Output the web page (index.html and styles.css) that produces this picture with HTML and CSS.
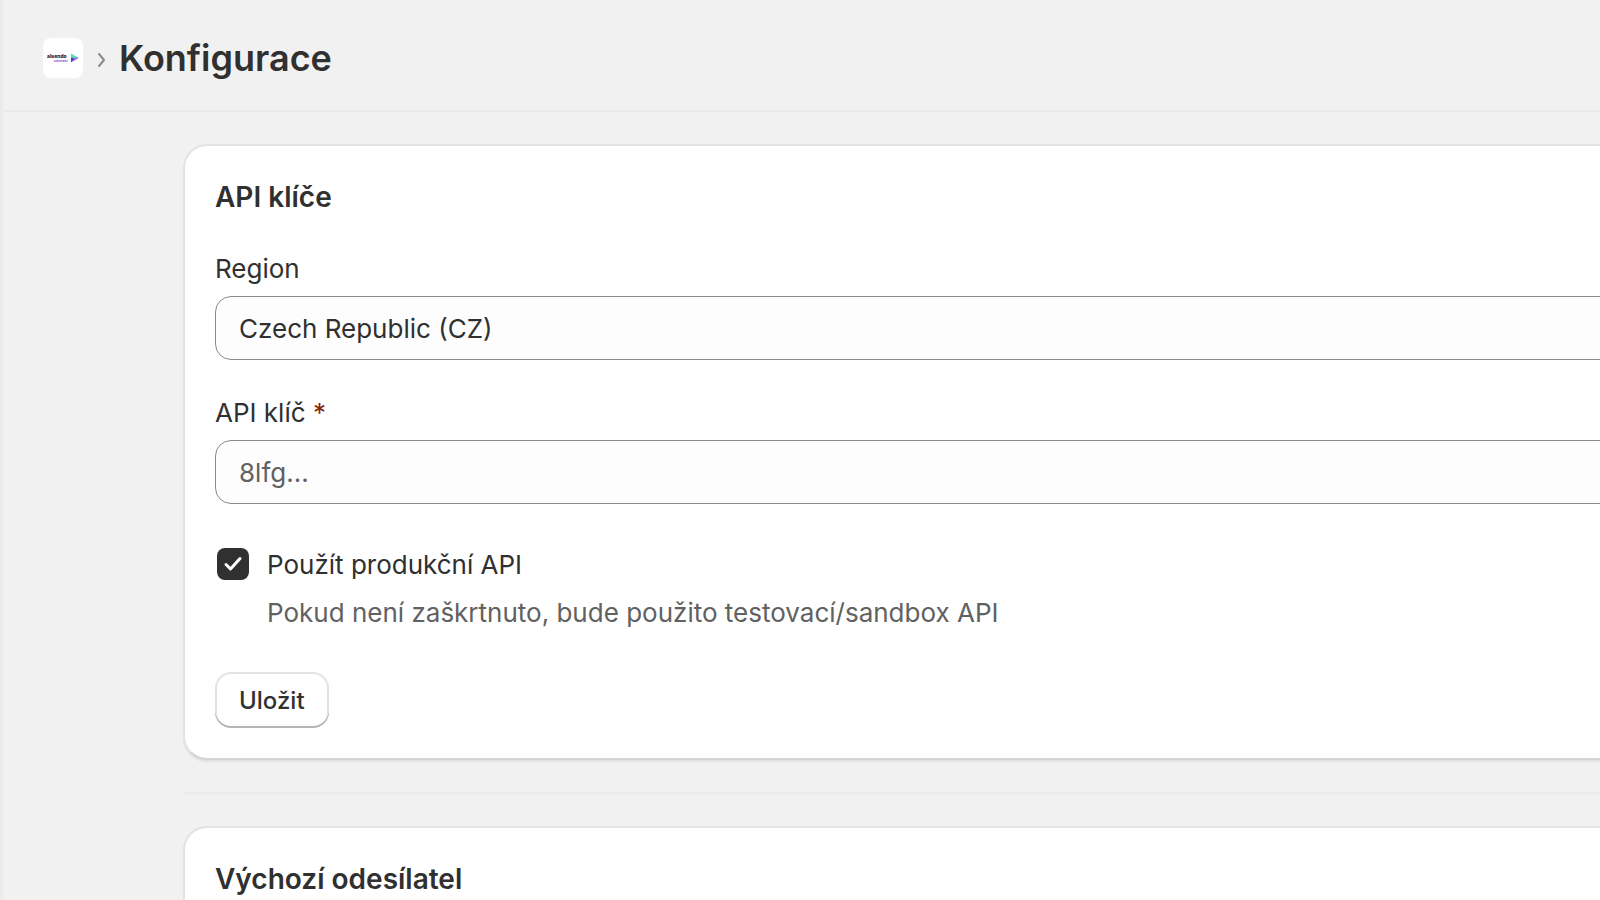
FILE: index.html
```html
<!DOCTYPE html>
<html lang="cs">
<head>
  <meta charset="UTF-8">
  <meta name="viewport" content="width=device-width, initial-scale=1.0">
  <title>Konfigurace</title>
  <link rel="stylesheet" href="styles.css">
</head>

<body>
  <div class="app">
    <header class="header">
      <a class="logo" href="#" aria-label="alsendo connect">
        <svg viewBox="0 0 40 40" width="40" height="40">
          <text class="logo-name" x="4" y="20" font-size="5">alsendo</text>
          <text class="logo-sub" x="11" y="24" font-size="3.500">connect</text>
          <path fill="#4fe0b5" d="M28 16.500q0-1 1-.500l6 3.400-3 1.600-4-.500z"/>
          <path fill="#9a7bea" d="M31 20l4-.800q.800.600 0 1.200l-5 3z"/>
          <path fill="#5a2fc8" d="M28 19.500l3.500 1-2.500 3.500q-1 .300-1-.600z"/>
        </svg>
      </a>
      <svg class="chevron" viewBox="0 0 12 20" width="12" height="20">
        <path d="M4 4l5 6-5 6"/>
      </svg>
      <h1 class="title">Konfigurace</h1>
    </header>

    <main class="content">
      <form class="card">
        <h2 class="card-title">API klíče</h2>

        <div class="field">
          <label for="region">Region</label>
          <select id="region">
            <option>Czech Republic (CZ)</option>
          </select>
        </div>

        <div class="field">
          <label for="apiKey">API klíč <span class="required">*</span></label>
          <input type="text" id="apiKey" placeholder="8lfg...">
        </div>

        <div class="choice">
          <input type="checkbox" id="production" aria-describedby="productionHelp" checked>
          <div class="choice-text">
            <label for="production">Použít produkční API</label>
            <p class="help" id="productionHelp">Pokud není zaškrtnuto, bude použito testovací/sandbox API</p>
          </div>
        </div>

        <button class="button" type="button">Uložit</button>
      </form>

      <hr class="divider">

      <section class="card">
        <h2 class="card-title">Výchozí odesílatel</h2>
      </section>
    </main>
  </div>
</body>
</html>
```

FILE: styles.css
```css
* {
  box-sizing: border-box;
}

body {
  margin: 0;
  background: #f1f1f1;
  color: #303030;
  font-family: Inter, "Liberation Sans", sans-serif;
  font-size: 26px;
  line-height: 42px;
  font-optical-sizing: none;
}

h1,
h2,
p {
  margin: 0;
}

.app {
  height: 100vh;
  border-left: 3px solid #ebebeb;
  overflow: hidden;
}

.header {
  display: flex;
  align-items: center;
  padding: 37px 40px 31px;
  border-bottom: 2px solid #eaeaea;
}

.logo {
  display: flex;
  background: #fff;
  border-radius: 8px;
}

.logo-name {
  font-weight: 800;
  fill: #1d1733;
}

.logo-sub {
  font-weight: 600;
  fill: #7a45d6;
}

.chevron {
  margin: 4px 12px 0;
  fill: none;
  stroke: #8a8a8a;
  stroke-width: 2;
  stroke-linecap: round;
  stroke-linejoin: round;
}

.title {
  font-size: 36px;
  font-weight: 600;
}

/* cards run past the right edge of the window */
.content {
  padding: 32px 0 32px 180px;
  margin-right: -64px;
}

.card {
  display: flex;
  flex-direction: column;
  gap: 30px;
  padding: 30px;
  background: #fff;
  border: 2px solid #e3e3e3;
  border-bottom-color: #d4d4d4;
  border-radius: 24px;
  box-shadow: 0 2px 1px rgba(26, 26, 26, 0.07);
}

.card-title {
  font-size: 28px;
  font-weight: 600;
}

.field {
  display: flex;
  flex-direction: column;
  gap: 6px;
  padding-bottom: 2px;
}

.field select,
.field input {
  width: 100%;
  height: 64px;
  padding: 1px 23px 0;
  border: 1px solid #8a8a8a;
  border-radius: 16px;
  background: #fdfdfd;
  color: #303030;
  font: inherit;
  appearance: none;
}

.field input::placeholder {
  color: #616161;
}

.required {
  color: #8e1f0b;
}

.choice {
  display: flex;
  gap: 18px;
  padding: 8px 0 8px 2px;
}

.choice input {
  width: 32px;
  height: 32px;
  margin: 4px 0;
  border-radius: 8px;
  background: #303030 url("data:image/svg+xml,%3Csvg xmlns='http://www.w3.org/2000/svg' viewBox='0 0 32 32'%3E%3Cpath d='M9 16.500l4.500 4.500L23 10.500' fill='none' stroke='%23fff' stroke-width='3' stroke-linecap='round' stroke-linejoin='round'/%3E%3C/svg%3E");
  appearance: none;
}

.choice-text {
  display: flex;
  flex-direction: column;
  gap: 6px;
}

.help {
  color: #616161;
}

.button {
  align-self: flex-start;
  height: 56px;
  padding: 1px 24px 0;
  border: 0;
  border-radius: 16px;
  background: #fff;
  box-shadow: inset 0 -2px 0 #b5b5b5, inset 0 0 0 2px #e3e3e3;
  color: #303030;
  font: inherit;
  font-size: 24px;
  font-weight: 500;
}

.divider {
  height: 2px;
  margin: 32px 0;
  border: 0;
  background: #ebebeb;
}
```
